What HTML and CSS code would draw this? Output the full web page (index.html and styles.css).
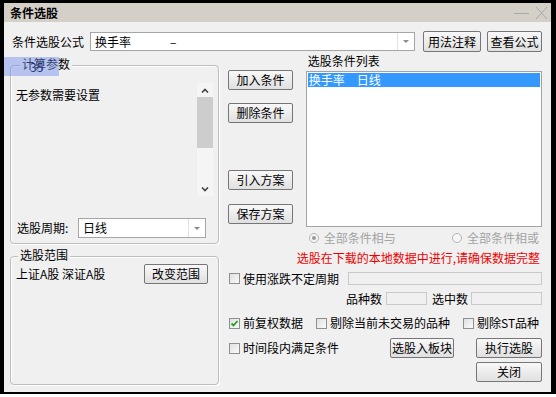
FILE: index.html
```html
<!DOCTYPE html>
<html lang="zh-CN">
<head>
  <meta charset="UTF-8" />
  <title>条件选股</title>
  <link rel="stylesheet" href="styles.css">
</head>
<body>
  <div class="window">
    <div class="titlebar">
      <span class="title">条件选股</span>
      <svg class="title-ctl" width="38" height="19" viewBox="0 0 38 19">
        <line x1="4" y1="10.5" x2="19" y2="10.5" stroke="#a8a8a8" stroke-width="1"/>
        <line x1="26" y1="4" x2="37" y2="16" stroke="#a8a8a8" stroke-width="1"/>
        <line x1="37" y1="4" x2="26" y2="16" stroke="#a8a8a8" stroke-width="1"/>
      </svg>
    </div>

    <div class="content">
      <div class="formula-row">
        <span class="formula-label">条件选股公式</span>
        <div class="combo formula-combo">
          <span class="combo-text">换手率<span class="dash">–</span></span>
          <span class="combo-arrow"><i class="tri"></i></span>
        </div>
        <div class="btn btn-note">用法注释</div>
        <div class="btn btn-view">查看公式</div>
      </div>

      <div class="main">
        <div class="left">
          <div class="group group-params">
            <div class="group-title">计算参数</div>
            <div class="params">
              <span class="params-text">无参数需要设置</span>
              <div class="scrollbar">
                <div class="sb-btn">
                  <svg width="8" height="5" viewBox="0 0 8 5"><polyline points="1,4.5 4,1.5 7,4.5" fill="none" stroke="#444" stroke-width="1.6"/></svg>
                </div>
                <div class="sb-thumb"></div>
                <div class="sb-track"></div>
                <div class="sb-btn">
                  <svg width="8" height="5" viewBox="0 0 8 5"><polyline points="1,0.5 4,3.5 7,0.5" fill="none" stroke="#444" stroke-width="1.6"/></svg>
                </div>
              </div>
            </div>
            <div class="period">
              <span class="period-label">选股周期:</span>
              <div class="combo period-combo">
                <span class="combo-text">日线</span>
                <span class="combo-arrow"><i class="tri"></i></span>
              </div>
            </div>
          </div>

          <div class="group group-range">
            <div class="group-title">选股范围</div>
            <div class="range-row">
              <span>上证A股 深证A股</span>
              <div class="btn btn-range">改变范围</div>
            </div>
          </div>
        </div>

        <div class="right">
          <div class="upper">
            <div class="mid">
              <div class="btn btn-add">加入条件</div>
              <div class="btn btn-del">删除条件</div>
              <div class="btn btn-load">引入方案</div>
              <div class="btn btn-save">保存方案</div>
            </div>
            <div class="list-col">
              <div class="list-label">选股条件列表</div>
              <div class="cond-list">
                <div class="cond-item selected">换手率　日线</div>
              </div>
              <div class="radios">
                <span class="radio-item"><i class="radio checked"></i>全部条件相与</span>
                <span class="radio-item"><i class="radio"></i>全部条件相或</span>
              </div>
            </div>
          </div>

          <div class="warn">选股在下载的本地数据中进行,请确保数据完整</div>

          <div class="row row-period">
            <span class="cb-item"><i class="cb"></i>使用涨跌不定周期</span>
            <span class="field field-period"></span>
          </div>

          <div class="row row-counts">
            <span>品种数</span>
            <span class="field field-total"></span>
            <span class="count-label">选中数</span>
            <span class="field field-sel"></span>
          </div>

          <div class="row row-opts">
            <span class="cb-item">
              <i class="cb"><svg width="9" height="9" viewBox="0 0 9 9"><polyline points="1.5,4.5 3.5,6.5 7.5,2" fill="none" stroke="#22a022" stroke-width="1.8"/></svg></i>前复权数据
            </span>
            <span class="cb-item opt-gap"><i class="cb"></i>剔除当前未交易的品种</span>
            <span class="cb-item opt-gap"><i class="cb"></i>剔除ST品种</span>
          </div>

          <div class="row row-actions">
            <span class="cb-item"><i class="cb"></i>时间段内满足条件</span>
            <div class="btn btn-block">选股入板块</div>
            <div class="btn btn-run">执行选股</div>
          </div>

          <div class="row row-close">
            <div class="btn btn-close">关闭</div>
          </div>
        </div>
      </div>
    </div>

    <div class="tip">35</div>
  </div>
</body>
</html>
```

FILE: styles.css
```css
body {
  margin: 0;
  background: #fff;
  font: 12px/14px "Noto Sans CJK SC", "Noto Sans", sans-serif;
  color: #000;
}
.window {
  position: relative;
  width: 547px;
  height: 389px;
  border-left: 4px solid #000;
  border-top: 3px solid #000;
  border-right: 5px solid #000;
  border-bottom: 2px solid #000;
  background: #f0f0f0;
}
.titlebar {
  height: 19px;
  background: #d4d0c8;
  display: flex;
  align-items: center;
  padding-left: 6px;
}
.title {
  font-weight: bold;
}
.title-ctl {
  margin-left: auto;
  margin-right: 3px;
}
.content {
  padding: 9px 0 0 6px;
}

/* shared controls */
.btn {
  box-sizing: border-box;
  height: 20px;
  border: 1px solid #767676;
  border-radius: 2px;
  background: linear-gradient(#f8f8f8, #e0e0e0);
  line-height: 18px;
  text-align: center;
  white-space: nowrap;
}
.combo {
  box-sizing: border-box;
  display: flex;
  background: #fff;
  border: 1px solid #a6a6a6;
}
.combo-text {
  flex: 1;
  padding-left: 4px;
  line-height: 17px;
}
.combo-arrow {
  width: 16px;
  border-left: 1px solid #e2e2e2;
  display: flex;
  align-items: center;
  justify-content: center;
}
.tri {
  width: 0;
  height: 0;
  border-left: 3px solid transparent;
  border-right: 3px solid transparent;
  border-top: 3px solid #8a8a8a;
}
.field {
  box-sizing: border-box;
  height: 13px;
  border: 1px solid #c9c9c9;
  background: #f0f0f0;
}
.cb-item {
  display: flex;
  align-items: center;
}
.cb {
  box-sizing: border-box;
  width: 11px;
  height: 11px;
  border: 1px solid #8f8f8f;
  background: linear-gradient(135deg, #e0e0e0, #fbfbfb);
  margin-right: 3px;
  display: flex;
  align-items: center;
  justify-content: center;
}

/* formula row */
.formula-row {
  display: flex;
  align-items: center;
  height: 21px;
  padding-left: 2px;
}
.formula-label {
  width: 72px;
}
.formula-combo {
  margin-left: 6px;
  width: 325px;
  height: 19px;
}
.dash {
  margin-left: 39px;
}
.btn-note {
  margin-left: 8px;
  width: 58px;
  height: 21px;
  line-height: 19px;
}
.btn-view {
  margin-left: 6px;
  width: 55px;
  height: 21px;
  line-height: 19px;
}

/* main area */
.main {
  display: flex;
}
.left {
  width: 209px;
  padding-top: 13px;
}
.group {
  box-sizing: border-box;
  border: 1px solid #bdbdbd;
  border-radius: 4px;
  box-shadow: inset 1px 1px #fff, 1px 1px #fff;
}
.group-title {
  width: max-content;
  margin: -9px 0 0 9px;
  padding: 0 2px;
  background: #f0f0f0;
}
.group-params {
  height: 179px;
}
.group-range {
  margin-top: 12px;
  height: 129px;
}
.group-range .group-title {
  margin-left: 7px;
}
.params {
  display: flex;
  padding: 0 5px;
}
.params-text {
  margin-top: 17px;
}
.scrollbar {
  margin-left: auto;
  margin-top: 12px;
  width: 16px;
  height: 113px;
  display: flex;
  flex-direction: column;
  background: #f5f5f5;
}
.sb-btn {
  height: 14px;
  display: flex;
  align-items: center;
  justify-content: center;
}
.sb-thumb {
  height: 51px;
  background: #cdcdcd;
}
.sb-track {
  flex: 1;
}
.period {
  display: flex;
  align-items: center;
  margin-top: 22px;
  padding-left: 6px;
}
.period-label {
  width: 61px;
}
.period-combo {
  width: 128px;
  height: 20px;
}
.range-row {
  display: flex;
  align-items: center;
  margin-top: 2px;
  padding: 0 10px 0 5px;
}
.btn-range {
  margin-left: auto;
  width: 64px;
}

/* right side */
.right {
  margin-left: 9px;
  width: 314px;
}
.upper {
  display: flex;
}
.mid {
  width: 65px;
  display: flex;
  flex-direction: column;
  padding-top: 18px;
}
.btn-del {
  margin-top: 13px;
}
.btn-load {
  margin-top: 47px;
}
.btn-save {
  margin-top: 14px;
}
.list-col {
  margin-left: 13px;
  width: 237px;
  padding-top: 2px;
}
.list-label {
  padding-left: 2px;
}
.cond-list {
  box-sizing: border-box;
  margin-top: 3px;
  height: 156px;
  border: 1px solid #a3a3a3;
  background: #fff;
  padding: 1px;
}
.cond-item {
  height: 14px;
  padding-left: 1px;
}
.cond-item.selected {
  background: #3399ff;
  color: #fff;
}
.radios {
  display: flex;
  justify-content: space-between;
  margin-top: 4px;
  padding: 0 3px;
  color: #a3a3a3;
}
.radio-item {
  display: flex;
  align-items: center;
}
.radio {
  box-sizing: border-box;
  width: 10px;
  height: 10px;
  border: 1px solid #b4b4b4;
  border-radius: 50%;
  background: #f6f6f6;
  margin-right: 5px;
  display: flex;
  align-items: center;
  justify-content: center;
}
.radio.checked::after {
  content: "";
  width: 4px;
  height: 4px;
  border-radius: 50%;
  background: #9a9a9a;
}
.warn {
  margin-top: 6px;
  text-align: right;
  padding-right: 2px;
  color: #ee0000;
}
.row {
  display: flex;
  align-items: center;
  padding-left: 1px;
}
.row-period {
  height: 13px;
  margin-top: 7px;
}
.field-period {
  margin-left: auto;
  width: 194px;
}
.row-counts {
  height: 13px;
  margin-top: 7px;
  justify-content: flex-end;
}
.field-total {
  margin-left: 4px;
  width: 41px;
}
.count-label {
  margin-left: 5px;
}
.field-sel {
  margin-left: 3px;
  width: 71px;
}
.row-opts {
  height: 14px;
  margin-top: 11px;
}
.opt-gap {
  margin-left: 13px;
}
.row-actions {
  height: 20px;
  margin-top: 8px;
}
.btn-block {
  margin-left: auto;
  width: 64px;
}
.btn-run {
  margin-left: 22px;
  width: 66px;
}
.row-close {
  margin-top: 4px;
  justify-content: flex-end;
}
.btn-close {
  width: 66px;
}

/* hover tooltip lying over the group title */
.tip {
  position: absolute;
  left: 0;
  top: 54px;
  width: 55px;
  height: 19px;
  box-sizing: border-box;
  padding-left: 26px;
  line-height: 19px;
  background: rgba(110, 140, 235, 0.45);
  color: #27337a;
}
```
